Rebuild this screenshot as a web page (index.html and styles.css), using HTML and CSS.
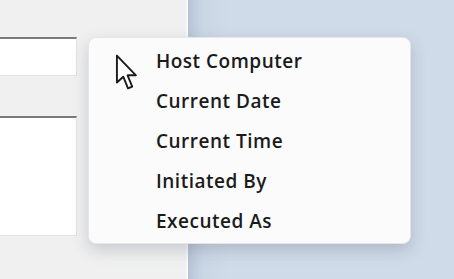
FILE: index.html
```html
<!DOCTYPE html>
<html lang="en">
<head>
  <meta charset="UTF-8" />
  <title>Context menu</title>
  <link rel="stylesheet" href="styles.css">
</head>
<body>
  <div class="screen">
    <div class="dialog">
      <div class="field single"></div>
      <div class="field multi"></div>
    </div>
    <div class="desktop"></div>

    <div class="context-menu">
      <svg class="cursor" width="26" height="38" viewBox="0 0 24 36">
        <path d="M1.5 1.5 L1.5 27 L7.5 21.5 L12 32.5 L16 30.8 L11.6 20.2 L19.5 20.2 Z"
              fill="#fff" stroke="#1a1a1a" stroke-width="1.8" stroke-linejoin="round"/>
      </svg>
      <div class="menu-item">Host Computer</div>
      <div class="menu-item">Current Date</div>
      <div class="menu-item">Current Time</div>
      <div class="menu-item">Initiated By</div>
      <div class="menu-item">Executed As</div>
    </div>
  </div>
</body>
</html>
```

FILE: styles.css
```css
* {
  box-sizing: border-box;
}

body {
  margin: 0;
  font-family: "Open Sans", "Noto Sans", sans-serif;
  background: #cfdbe8;
}

.screen {
  position: relative;
  width: 454px;
  height: 279px;
  display: flex;
  overflow: hidden;
}

.dialog {
  width: 188px;
  background: #f0f0f0;
  border-right: 2px solid #f8f8f8;
  padding-top: 37px;
}

.field {
  width: 77px;
  background: #fff;
  border: 1px solid #e2e2e2;
  border-top: 2px solid #7a7a7a;
  border-left: none;
}

.field.single {
  height: 39px;
  margin-bottom: 40px;
}

.field.multi {
  height: 120px;
}

.desktop {
  flex: 1;
  background: linear-gradient(90deg, #b6c4d4 0px, #c9d6e4 14px, #cfdbe8 40px);
}

.context-menu {
  position: absolute;
  left: 88px;
  top: 37px;
  width: 323px;
  height: 207px;
  background: #fbfbfb;
  border: 1px solid #e6e6e6;
  border-radius: 8px;
  box-shadow: 0 6px 16px rgba(60, 70, 90, 0.22);
  padding: 8px 0 0 67px;
}

.cursor {
  position: absolute;
  left: 26px;
  top: 16px;
}

.menu-item {
  height: 40px;
  line-height: 30px;
  font-size: 19px;
  font-weight: 600;
  color: #1b1b1b;
  letter-spacing: 0.5px;
}
```
